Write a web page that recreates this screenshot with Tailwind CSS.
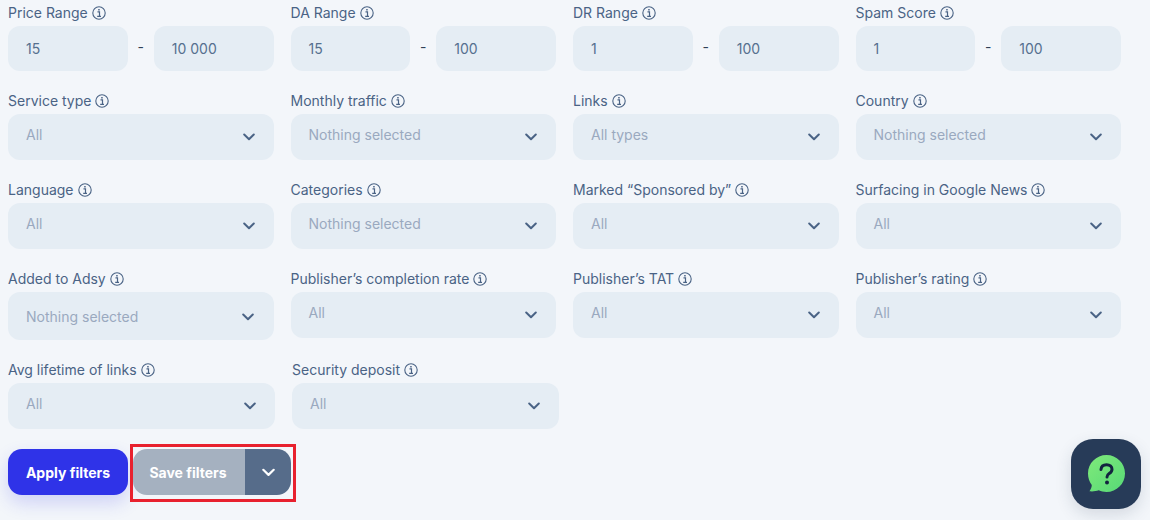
<!DOCTYPE html>
<html lang="en">
<head>
  <meta charset="UTF-8"/>
  <title>Filters</title>
  <script src="https://cdn.jsdelivr.net/npm/@tailwindcss/browser@4"></script>
</head>
<body class="relative h-[520px] w-[1150px] overflow-hidden bg-[#f3f6fa] font-['Inter',sans-serif] text-[14px] text-[#4a6385]">

  <svg class="hidden">
    <symbol id="info" viewBox="0 0 14 14">
      <circle cx="7" cy="7" r="6.2" fill="none" stroke="currentColor" stroke-width="1.1"/>
      <path d="M5.500 5.900h2v4.300M5.200 10.400h3.800" fill="none" stroke="currentColor" stroke-width="1.200"/>
      <rect x="6.200" y="3" width="1.500" height="1.500" fill="currentColor"/>
    </symbol>
    <symbol id="chev" viewBox="0 0 12 8">
      <path d="M1.200 1.500 6 6.200l4.800-4.700" fill="none" stroke="currentColor" stroke-width="2" stroke-linecap="round" stroke-linejoin="round"/>
    </symbol>
  </svg>

  <div class="ml-[8px] w-[1113px] pt-[4px]">

    <!-- Ranges -->
    <div class="grid h-[88px] grid-cols-4 gap-x-[17px]">
      <div>
        <div class="flex h-[18px] items-center gap-[4px] leading-[18px]">Price Range <svg class="size-[14px]"><use href="#info"/></svg></div>
        <div class="mt-[4px] flex items-center">
          <div class="flex h-[45px] flex-1 items-center rounded-[12px] bg-[#e5edf4] pb-[1px] pl-[18px] text-[#56708f]">15</div>
          <div class="w-[26px] pb-[4px] text-center text-[#2f3f56]">-</div>
          <div class="flex h-[45px] flex-1 items-center rounded-[12px] bg-[#e5edf4] pb-[1px] pl-[18px] text-[#56708f]">10 000</div>
        </div>
      </div>
      <div>
        <div class="flex h-[18px] items-center gap-[4px] leading-[18px]">DA Range <svg class="size-[14px]"><use href="#info"/></svg></div>
        <div class="mt-[4px] flex items-center">
          <div class="flex h-[45px] flex-1 items-center rounded-[12px] bg-[#e5edf4] pb-[1px] pl-[18px] text-[#56708f]">15</div>
          <div class="w-[26px] pb-[4px] text-center text-[#2f3f56]">-</div>
          <div class="flex h-[45px] flex-1 items-center rounded-[12px] bg-[#e5edf4] pb-[1px] pl-[18px] text-[#56708f]">100</div>
        </div>
      </div>
      <div>
        <div class="flex h-[18px] items-center gap-[4px] leading-[18px]">DR Range <svg class="size-[14px]"><use href="#info"/></svg></div>
        <div class="mt-[4px] flex items-center">
          <div class="flex h-[45px] flex-1 items-center rounded-[12px] bg-[#e5edf4] pb-[1px] pl-[18px] text-[#56708f]">1</div>
          <div class="w-[26px] pb-[4px] text-center text-[#2f3f56]">-</div>
          <div class="flex h-[45px] flex-1 items-center rounded-[12px] bg-[#e5edf4] pb-[1px] pl-[18px] text-[#56708f]">100</div>
        </div>
      </div>
      <div>
        <div class="flex h-[18px] items-center gap-[4px] leading-[18px]">Spam Score <svg class="size-[14px]"><use href="#info"/></svg></div>
        <div class="mt-[4px] flex items-center">
          <div class="flex h-[45px] flex-1 items-center rounded-[12px] bg-[#e5edf4] pb-[1px] pl-[18px] text-[#56708f]">1</div>
          <div class="w-[26px] pb-[4px] text-center text-[#2f3f56]">-</div>
          <div class="flex h-[45px] flex-1 items-center rounded-[12px] bg-[#e5edf4] pb-[1px] pl-[18px] text-[#56708f]">100</div>
        </div>
      </div>
    </div>

    <!-- Row 2 -->
    <div class="grid h-[89px] grid-cols-4 gap-x-[17px]">
      <div>
        <div class="flex h-[18px] items-center gap-[4px] leading-[18px]">Service type <svg class="size-[14px]"><use href="#info"/></svg></div>
        <div class="mt-[4px] flex h-[46px] items-center justify-between rounded-[12px] bg-[#e5edf4] pr-[19px] pl-[18px] text-[#9aa9bf]"><span class="-mt-[6px]">All</span><svg class="size-[12px] text-[#4a6385]"><use href="#chev"/></svg></div>
      </div>
      <div>
        <div class="flex h-[18px] items-center gap-[4px] leading-[18px]">Monthly traffic <svg class="size-[14px]"><use href="#info"/></svg></div>
        <div class="mt-[4px] flex h-[46px] items-center justify-between rounded-[12px] bg-[#e5edf4] pr-[19px] pl-[18px] text-[#9aa9bf]"><span class="-mt-[6px]">Nothing selected</span><svg class="size-[12px] text-[#4a6385]"><use href="#chev"/></svg></div>
      </div>
      <div>
        <div class="flex h-[18px] items-center gap-[4px] leading-[18px]">Links <svg class="size-[14px]"><use href="#info"/></svg></div>
        <div class="mt-[4px] flex h-[46px] items-center justify-between rounded-[12px] bg-[#e5edf4] pr-[19px] pl-[18px] text-[#9aa9bf]"><span class="-mt-[6px]">All types</span><svg class="size-[12px] text-[#4a6385]"><use href="#chev"/></svg></div>
      </div>
      <div>
        <div class="flex h-[18px] items-center gap-[4px] leading-[18px]">Country <svg class="size-[14px]"><use href="#info"/></svg></div>
        <div class="mt-[4px] flex h-[46px] items-center justify-between rounded-[12px] bg-[#e5edf4] pr-[19px] pl-[18px] text-[#9aa9bf]"><span class="-mt-[6px]">Nothing selected</span><svg class="size-[12px] text-[#4a6385]"><use href="#chev"/></svg></div>
      </div>
    </div>

    <!-- Row 3 -->
    <div class="grid h-[89px] grid-cols-4 gap-x-[17px]">
      <div>
        <div class="flex h-[18px] items-center gap-[4px] leading-[18px]">Language <svg class="size-[14px]"><use href="#info"/></svg></div>
        <div class="mt-[4px] flex h-[46px] items-center justify-between rounded-[12px] bg-[#e5edf4] pr-[19px] pl-[18px] text-[#9aa9bf]"><span class="-mt-[6px]">All</span><svg class="size-[12px] text-[#4a6385]"><use href="#chev"/></svg></div>
      </div>
      <div>
        <div class="flex h-[18px] items-center gap-[4px] leading-[18px]">Categories <svg class="size-[14px]"><use href="#info"/></svg></div>
        <div class="mt-[4px] flex h-[46px] items-center justify-between rounded-[12px] bg-[#e5edf4] pr-[19px] pl-[18px] text-[#9aa9bf]"><span class="-mt-[6px]">Nothing selected</span><svg class="size-[12px] text-[#4a6385]"><use href="#chev"/></svg></div>
      </div>
      <div>
        <div class="flex h-[18px] items-center gap-[4px] leading-[18px]">Marked “Sponsored by” <svg class="size-[14px]"><use href="#info"/></svg></div>
        <div class="mt-[4px] flex h-[46px] items-center justify-between rounded-[12px] bg-[#e5edf4] pr-[19px] pl-[18px] text-[#9aa9bf]"><span class="-mt-[6px]">All</span><svg class="size-[12px] text-[#4a6385]"><use href="#chev"/></svg></div>
      </div>
      <div>
        <div class="flex h-[18px] items-center gap-[4px] leading-[18px]">Surfacing in Google News <svg class="size-[14px]"><use href="#info"/></svg></div>
        <div class="mt-[4px] flex h-[46px] items-center justify-between rounded-[12px] bg-[#e5edf4] pr-[19px] pl-[18px] text-[#9aa9bf]"><span class="-mt-[6px]">All</span><svg class="size-[12px] text-[#4a6385]"><use href="#chev"/></svg></div>
      </div>
    </div>

    <!-- Row 4 -->
    <div class="grid h-[91px] grid-cols-4 gap-x-[17px]">
      <div>
        <div class="flex h-[18px] items-center gap-[4px] leading-[18px]">Added to Adsy <svg class="size-[14px]"><use href="#info"/></svg></div>
        <div class="mt-[4px] flex h-[48px] items-center justify-between rounded-[12px] bg-[#e5edf4] pr-[20px] pl-[18px] text-[#9aa9bf]"><span>Nothing selected</span><svg class="mt-[2px] size-[12px] text-[#4a6385]"><use href="#chev"/></svg></div>
      </div>
      <div>
        <div class="flex h-[18px] items-center gap-[4px] leading-[18px]">Publisher’s completion rate <svg class="size-[14px]"><use href="#info"/></svg></div>
        <div class="mt-[4px] flex h-[46px] items-center justify-between rounded-[12px] bg-[#e5edf4] pr-[19px] pl-[18px] text-[#9aa9bf]"><span class="-mt-[6px]">All</span><svg class="size-[12px] text-[#4a6385]"><use href="#chev"/></svg></div>
      </div>
      <div>
        <div class="flex h-[18px] items-center gap-[4px] leading-[18px]">Publisher’s TAT <svg class="size-[14px]"><use href="#info"/></svg></div>
        <div class="mt-[4px] flex h-[46px] items-center justify-between rounded-[12px] bg-[#e5edf4] pr-[19px] pl-[18px] text-[#9aa9bf]"><span class="-mt-[6px]">All</span><svg class="size-[12px] text-[#4a6385]"><use href="#chev"/></svg></div>
      </div>
      <div>
        <div class="flex h-[18px] items-center gap-[4px] leading-[18px]">Publisher’s rating <svg class="size-[14px]"><use href="#info"/></svg></div>
        <div class="mt-[4px] flex h-[46px] items-center justify-between rounded-[12px] bg-[#e5edf4] pr-[19px] pl-[18px] text-[#9aa9bf]"><span class="-mt-[6px]">All</span><svg class="size-[12px] text-[#4a6385]"><use href="#chev"/></svg></div>
      </div>
    </div>

    <!-- Row 5 -->
    <div class="flex h-[74px] gap-x-[17px]">
      <div class="w-[267px]">
        <div class="flex h-[18px] items-center gap-[4px] leading-[18px]">Avg lifetime of links <svg class="size-[14px]"><use href="#info"/></svg></div>
        <div class="mt-[4px] flex h-[46px] items-center justify-between rounded-[12px] bg-[#e5edf4] pr-[19px] pl-[18px] text-[#9aa9bf]"><span class="-mt-[6px]">All</span><svg class="size-[12px] text-[#4a6385]"><use href="#chev"/></svg></div>
      </div>
      <div class="w-[267px]">
        <div class="flex h-[18px] items-center gap-[4px] leading-[18px]">Security deposit <svg class="size-[14px]"><use href="#info"/></svg></div>
        <div class="mt-[4px] flex h-[46px] items-center justify-between rounded-[12px] bg-[#e5edf4] pr-[19px] pl-[18px] text-[#9aa9bf]"><span class="-mt-[6px]">All</span><svg class="size-[12px] text-[#4a6385]"><use href="#chev"/></svg></div>
      </div>
    </div>

    <!-- Actions -->
    <div class="mt-[9px] flex items-start gap-[2px]">
      <button class="mt-[5px] h-[46px] w-[120px] rounded-[14px] bg-[#2f33e8] font-bold text-white shadow-[0_8px_18px_rgba(47,51,232,0.18)]">Apply filters</button>
      <div class="border-[3px] border-[#e8212e] pt-[2px] pr-[2px] pb-[4px]">
        <div class="flex h-[46px] w-[158px] overflow-hidden rounded-[14px] font-bold text-white">
          <div class="flex w-[112px] items-center justify-center bg-[#a5b1c0] pr-[2px]">Save filters</div>
          <div class="flex w-[46px] items-center justify-center bg-[#566c8a]"><svg class="size-[13px]"><use href="#chev"/></svg></div>
        </div>
      </div>
    </div>
  </div>

  <!-- Help widget -->
  <div class="absolute top-[439px] left-[1071px] flex size-[70px] items-center justify-center rounded-[22px] bg-[#273b58] shadow-[0_6px_16px_rgba(39,59,88,0.15)]">
    <svg class="size-[40px]" viewBox="0 0 40 40">
      <defs>
        <linearGradient id="g" x1="0" y1="0" x2="1" y2="1">
          <stop offset="0" stop-color="#7fe97a"/>
          <stop offset="1" stop-color="#57d977"/>
        </linearGradient>
      </defs>
      <path d="M20.500 1C30.700 1 39 9.200 39 19.500S30.700 38 20.500 38c-2.800 0-5.400-.6-7.700-1.700C10 37.300 6.500 37.700 3.500 37.300c1.300-1.700 2.200-3.800 2.300-6.200C3.400 28 2 24 2 19.500 2 9.200 10.300 1 20.500 1Z" fill="url(#g)"/>
      <path d="M15 15.500c.2-3 2.500-4.800 5.600-4.800 3.200 0 5.400 1.900 5.400 4.500 0 2.200-1.200 3.300-2.800 4.400-1.500 1-2.200 1.800-2.200 3.400" fill="none" stroke="#13233f" stroke-width="3" stroke-linecap="round"/>
      <circle cx="21" cy="28.500" r="2" fill="#13233f"/>
    </svg>
  </div>

</body>
</html>
